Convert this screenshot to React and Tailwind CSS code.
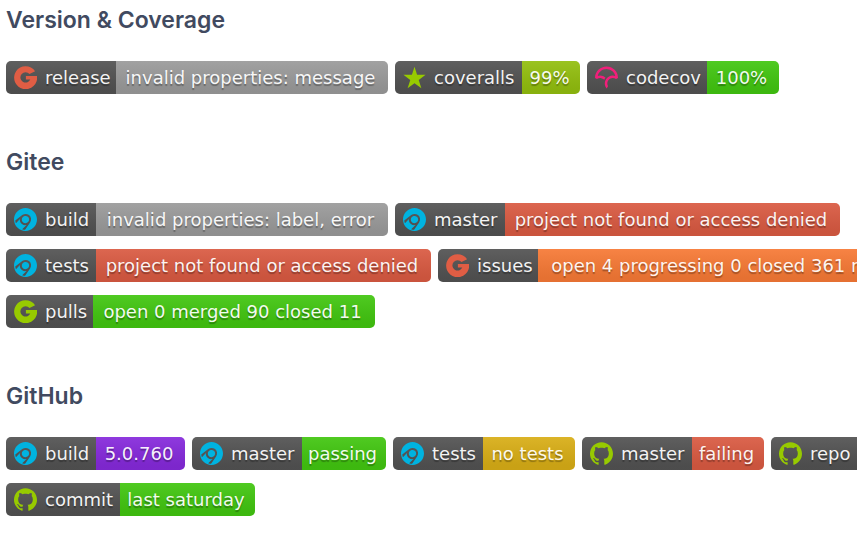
import React from "react";
import { SiAppveyor, SiCodecov, SiGithub } from "react-icons/si";

const GiteeIcon = ({ className }) => (
  <svg className={className} viewBox="0 0 24 24" fill="currentColor" aria-hidden="true">
    <path d="M22 5.4A12 12 0 1 0 24 10.4H12.4V14.2H17A5.4 5.4 0 1 1 16.2 8.4Z" />
  </svg>
);

const StarIcon = ({ className }) => (
  <svg className={className} viewBox="0 0 24 24" fill="currentColor" aria-hidden="true">
    <path d="M12 0.8 14.7 9.2H23.6L16.4 14.5 19.2 23.2 12 17.9 4.8 23.2 7.6 14.5 0.4 9.2H9.3Z" />
  </svg>
);

// labelWidth and valueWidth are the widths of the two halves of a badge
const sections = [
  {
    title: "Version & Coverage",
    rows: [
      [
        { icon: GiteeIcon, tint: "text-[#e05d44]", label: "release", labelWidth: "w-[110px]", value: "invalid properties: message", valueWidth: "w-[272px]", fill: "bg-[#9f9f9f]" },
        { icon: StarIcon, tint: "text-[#97ca00]", label: "coveralls", labelWidth: "w-[127px]", value: "99%", valueWidth: "w-[58px]", fill: "bg-[#97c40f]" },
        { icon: SiCodecov, tint: "text-[#f01f7a]", label: "codecov", labelWidth: "w-[120px]", value: "100%", valueWidth: "w-[72px]", fill: "bg-[#4c1]" },
      ],
    ],
  },
  {
    title: "Gitee",
    rows: [
      [
        { icon: SiAppveyor, tint: "text-[#00b3e0]", label: "build", labelWidth: "w-[90px]", value: "invalid properties: label, error", valueWidth: "w-[292px]", fill: "bg-[#9f9f9f]" },
        { icon: SiAppveyor, tint: "text-[#00b3e0]", label: "master", labelWidth: "w-[110px]", value: "project not found or access denied", valueWidth: "w-[335px]", fill: "bg-[#e05d44]" },
      ],
      [
        { icon: SiAppveyor, tint: "text-[#00b3e0]", label: "tests", labelWidth: "w-[90px]", value: "project not found or access denied", valueWidth: "w-[335px]", fill: "bg-[#e05d44]" },
        { icon: GiteeIcon, tint: "text-[#e05d44]", label: "issues", labelWidth: "w-[100px]", value: "open 4 progressing 0 closed 361 rejected 0", valueWidth: "w-[420px]", fill: "bg-[#fe7d37]" },
      ],
      [
        { icon: GiteeIcon, tint: "text-[#97ca00]", label: "pulls", labelWidth: "w-[87px]", value: "open 0 merged 90 closed 11", valueWidth: "w-[282px]", fill: "bg-[#4c1]" },
      ],
    ],
  },
  {
    title: "GitHub",
    rows: [
      [
        { icon: SiAppveyor, tint: "text-[#00b3e0]", label: "build", labelWidth: "w-[90px]", value: "5.0.760", valueWidth: "w-[89px]", fill: "bg-[#8a2be2]" },
        { icon: SiAppveyor, tint: "text-[#00b3e0]", label: "master", labelWidth: "w-[110px]", value: "passing", valueWidth: "w-[84px]", fill: "bg-[#4c1]" },
        { icon: SiAppveyor, tint: "text-[#00b3e0]", label: "tests", labelWidth: "w-[90px]", value: "no tests", valueWidth: "w-[92px]", fill: "bg-[#dfb317]" },
        { icon: SiGithub, tint: "text-[#97ca00]", label: "master", labelWidth: "w-[110px]", value: "failing", valueWidth: "w-[72px]", fill: "bg-[#e05d44]" },
        { icon: SiGithub, tint: "text-[#97ca00]", label: "repo", labelWidth: "w-[110px]" },
      ],
      [
        { icon: SiGithub, tint: "text-[#97ca00]", label: "commit", labelWidth: "w-[114px]", value: "last saturday", valueWidth: "w-[135px]", fill: "bg-[#4c1]" },
      ],
    ],
  },
];

function Badge({ icon: Icon, tint, label, labelWidth, value, valueWidth, fill }) {
  return (
    <a
      href="#"
      className="flex h-[33px] shrink-0 overflow-hidden rounded-[5px] whitespace-nowrap text-lg leading-[33px] text-white/95 text-shadow-[0_2px_1px_rgb(0_0_0/0.3)]"
    >
      <span
        className={`flex items-center gap-2 bg-[#555] bg-linear-to-b from-[#bbb]/10 to-black/10 pl-2 ${labelWidth}`}
      >
        <Icon className={`size-[23px] shrink-0 ${tint}`} />
        {label}
      </span>
      {value && (
        <span
          className={`bg-linear-to-b from-[#bbb]/10 to-black/10 pr-[3px] text-center ${valueWidth} ${fill}`}
        >
          {value}
        </span>
      )}
    </a>
  );
}

function App() {
  return (
    <main className="flex flex-col gap-[51px] overflow-hidden bg-white pt-[3px] pl-[6px] font-['DejaVu_Sans',sans-serif]">
      {sections.map((section) => (
        <section key={section.title}>
          <h2 className="mb-6 font-[Inter,sans-serif] text-[23px] leading-[34px] font-semibold text-[#414a60]">
            {section.title}
          </h2>
          <div className="flex flex-col gap-[13px]">
            {section.rows.map((row, i) => (
              <div key={i} className="flex gap-[7px]">
                {row.map((badge) => (
                  <Badge key={badge.label + badge.value} {...badge} />
                ))}
              </div>
            ))}
          </div>
        </section>
      ))}
    </main>
  );
}

export default App;
